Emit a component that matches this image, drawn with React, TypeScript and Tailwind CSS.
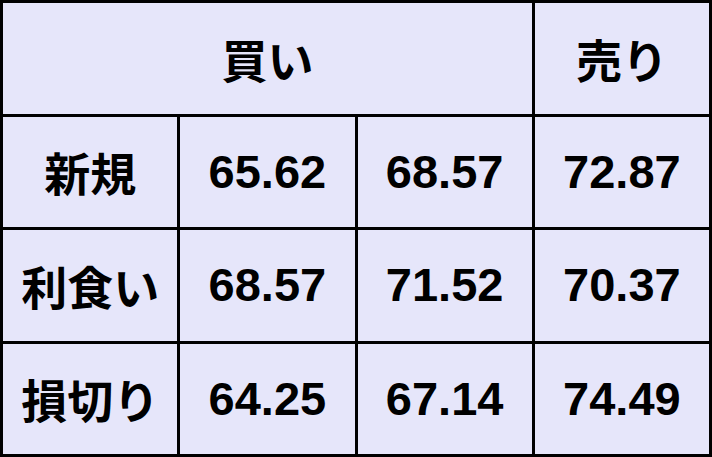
import { Fragment } from "react";

const rows = [
  { label: "新規", buy1: "65.62", buy2: "68.57", sell: "72.87" },
  { label: "利食い", buy1: "68.57", buy2: "71.52", sell: "70.37" },
  { label: "損切り", buy1: "64.25", buy2: "67.14", sell: "74.49" },
];

const cell = "bg-[#e6e6fa] flex items-center justify-center text-black";
const jp = "text-[46px] font-semibold font-['Noto_Sans_CJK_JP',sans-serif]";
const num = "text-[47px] font-bold font-['Liberation_Sans',Arial,sans-serif]";

export default function App() {
  return (
    <div className="w-[712px] h-[457px] bg-black p-[3px] grid grid-cols-4 grid-rows-4 gap-[3px]">
      {/* Header */}
      <div className={`${cell} ${jp} col-span-3`}>買い</div>
      <div className={`${cell} ${jp}`}>売り</div>

      {rows.map((r) => (
        <Fragment key={r.label}>
          <div className={`${cell} ${jp}`}>{r.label}</div>
          <div className={`${cell} ${num}`}>{r.buy1}</div>
          <div className={`${cell} ${num}`}>{r.buy2}</div>
          <div className={`${cell} ${num}`}>{r.sell}</div>
        </Fragment>
      ))}
    </div>
  );
}
